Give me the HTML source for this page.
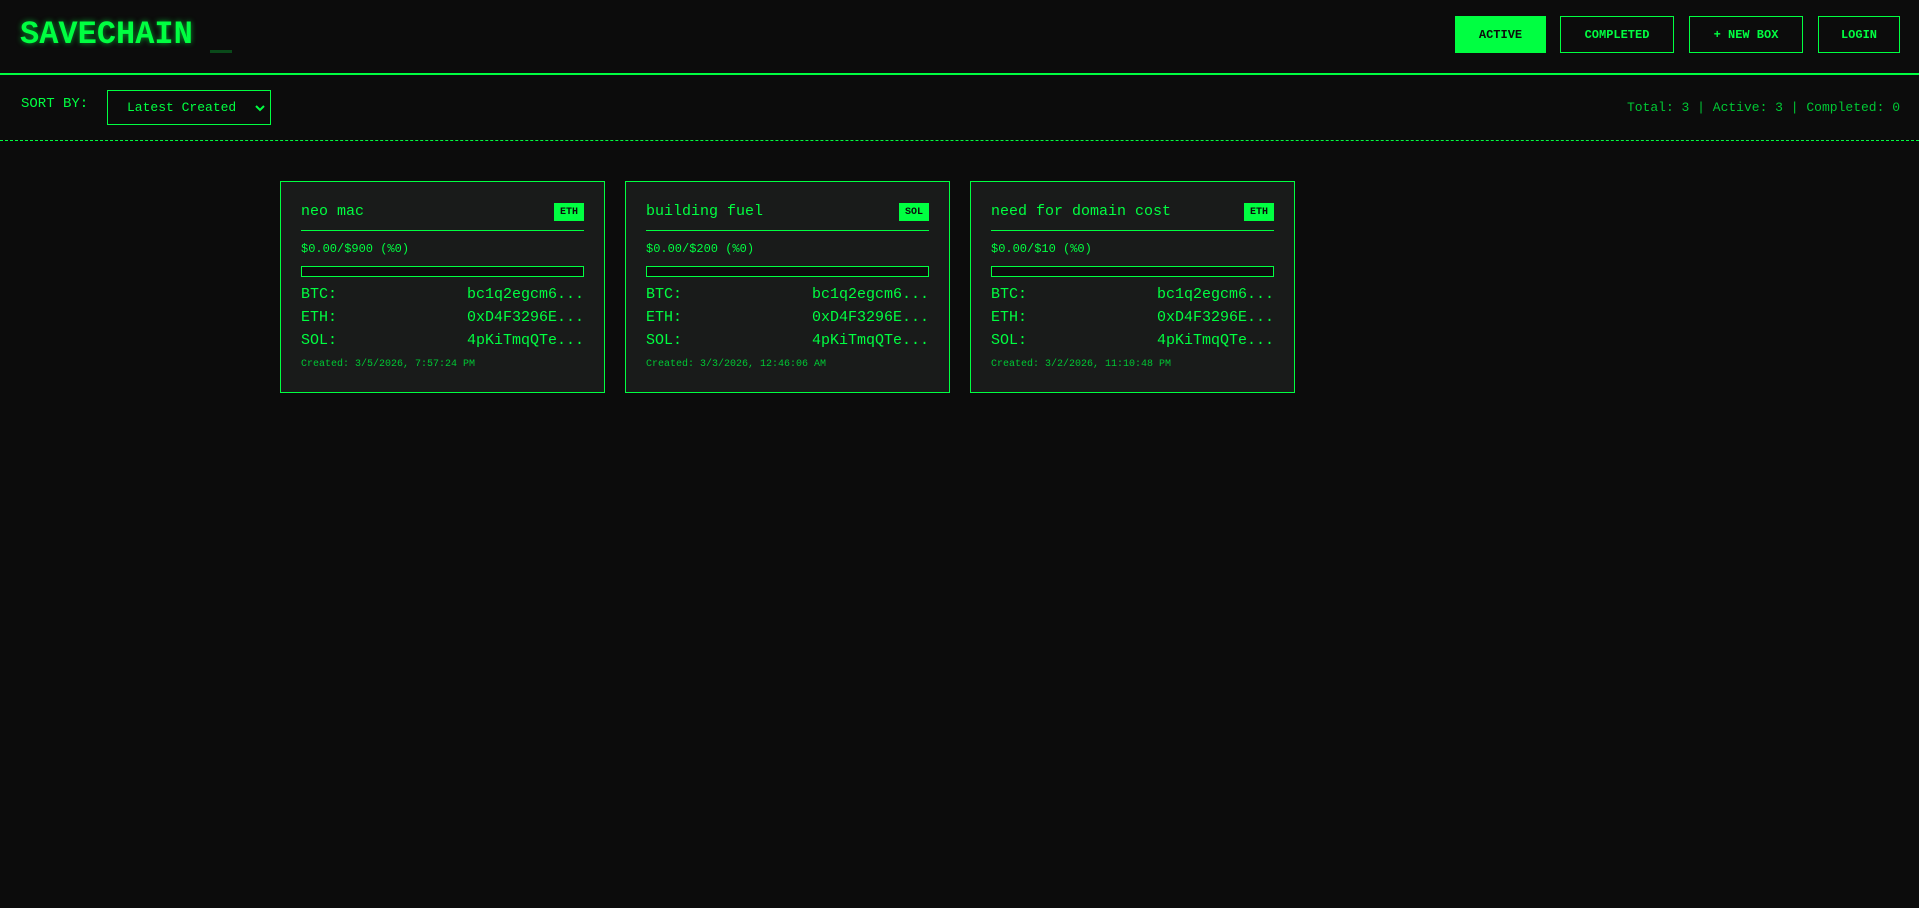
<!DOCTYPE html>
<html><head><style>
*{box-sizing:border-box;margin:0;padding:0}
body{width:1919px;height:908px;background:#0c0c0c;font-family:"Courier New","Nimbus Mono PS","Liberation Mono",monospace;color:#00ff41;position:relative;overflow:hidden}
.abs{position:absolute}
h1{position:absolute;left:20px;top:16px;font-size:32px;font-weight:bold;text-shadow:0 0 6px rgba(0,255,65,.6);letter-spacing:0}
.cur{position:absolute;left:210px;top:50px;width:22px;height:3px;background:#0a4a1a}
.hl{position:absolute;left:0;top:73px;width:1919px;height:2px;background:#00ff41}
.btn{position:absolute;top:16px;height:37px;border:1px solid #00ff41;font-size:12px;font-weight:bold;display:flex;align-items:center;justify-content:center;color:#00ff41}
.btn.on{background:#00ff41;color:#0c0c0c}
.sel{position:absolute;left:107px;top:90px;width:164px;height:35px;border:1px solid #00ff41;font-size:13px;padding-left:19px;display:flex;align-items:center}
.dl{position:absolute;left:0;top:140px;width:1919px;border-top:1px dashed #00ff41}
.card{position:absolute;top:181px;width:325px;height:212px;border:1px solid #00ff41;background:#191b1a;padding:0 20px}
.t{position:absolute;left:20px;top:21px;font-size:15px}
.b{position:absolute;right:20px;top:21px;width:30px;height:18px;background:#00ff41;color:#0c0c0c;font-size:10px;font-weight:bold;display:flex;align-items:center;justify-content:center}
.sep{position:absolute;left:20px;right:20px;top:48px;height:1px;background:#00ff41}
.amt{position:absolute;left:20px;top:60px;font-size:12px}
.bar{position:absolute;left:20px;right:20px;top:84px;height:11px;border:1px solid #00ff41;background:#0c0c0c}
.r{position:absolute;left:20px;right:20px;font-size:15px;display:flex;justify-content:space-between}
.cr{position:absolute;left:20px;top:177px;font-size:10px;color:#00c834}
</style></head><body>
<h1>SAVECHAIN</h1><div class="cur"></div>
<div class="btn on" style="left:1455px;width:91px">ACTIVE</div>
<div class="btn" style="left:1560px;width:114px">COMPLETED</div>
<div class="btn" style="left:1689px;width:114px">+ NEW BOX</div>
<div class="btn" style="left:1818px;width:82px">LOGIN</div>
<div class="hl"></div>
<div class="abs" style="left:21px;top:96px;font-size:14px">SORT BY:</div>
<div class="sel">Latest Created<svg class="abs" style="right:5px;top:13px" width="10" height="8" viewBox="0 0 10 8"><path d="M1 2l4 4 4-4" stroke="#00ff41" stroke-width="2" fill="none"/></svg></div>
<div class="abs" style="right:19px;top:100px;font-size:13px;color:#00c834">Total: 3 | Active: 3 | Completed: 0</div>
<div class="dl"></div>

<div class="card" style="left:280px"><div class="t">neo mac</div><div class="b">ETH</div><div class="sep"></div><div class="amt">$0.00/$900 (%0)</div><div class="bar"></div>
<div class="r" style="top:104px"><span>BTC:</span><span>bc1q2egcm6...</span></div><div class="r" style="top:127px"><span>ETH:</span><span>0xD4F3296E...</span></div><div class="r" style="top:150px"><span>SOL:</span><span>4pKiTmqQTe...</span></div><div class="cr">Created: 3/5/2026, 7:57:24 PM</div></div>

<div class="card" style="left:625px"><div class="t">building fuel</div><div class="b">SOL</div><div class="sep"></div><div class="amt">$0.00/$200 (%0)</div><div class="bar"></div>
<div class="r" style="top:104px"><span>BTC:</span><span>bc1q2egcm6...</span></div><div class="r" style="top:127px"><span>ETH:</span><span>0xD4F3296E...</span></div><div class="r" style="top:150px"><span>SOL:</span><span>4pKiTmqQTe...</span></div><div class="cr">Created: 3/3/2026, 12:46:06 AM</div></div>

<div class="card" style="left:970px"><div class="t">need for domain cost</div><div class="b">ETH</div><div class="sep"></div><div class="amt">$0.00/$10 (%0)</div><div class="bar"></div>
<div class="r" style="top:104px"><span>BTC:</span><span>bc1q2egcm6...</span></div><div class="r" style="top:127px"><span>ETH:</span><span>0xD4F3296E...</span></div><div class="r" style="top:150px"><span>SOL:</span><span>4pKiTmqQTe...</span></div><div class="cr">Created: 3/2/2026, 11:10:48 PM</div></div>
</body></html>
